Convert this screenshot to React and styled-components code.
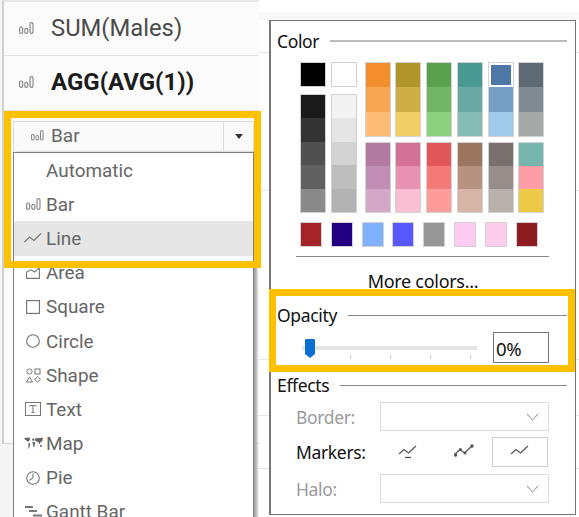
import React from "react";
import styled, { createGlobalStyle } from "styled-components";

const GlobalStyle = createGlobalStyle`
  html, body {
    margin: 0;
    padding: 0;
    background: #fff;
  }
  * {
    box-sizing: border-box;
  }
`;

const HIGHLIGHT = "#ffc000";
const MENU_FONT = `Roboto, "Liberation Sans", sans-serif`;
const DIALOG_FONT = `"Noto Sans", "Open Sans", sans-serif`;

const Page = styled.div`
  position: relative;
  display: flex;
  width: 579px;
  height: 517px;
  overflow: hidden;
  background: #fff;
`;

const Backdrop = styled.div`
  flex: 1;
  margin-top: 12px;
  height: 505px;
  background-color: #fff;
  background-image:
    linear-gradient(#f7f7f7, #f7f7f7),
    linear-gradient(#e6e6e6, #e6e6e6),
    linear-gradient(#e6e6e6, #e6e6e6),
    linear-gradient(#e6e6e6, #e6e6e6),
    linear-gradient(#e6e6e6, #e6e6e6),
    linear-gradient(#e6e6e6, #e6e6e6);
  background-repeat: no-repeat;
  background-size:
    100% 8px,
    100% 1px,
    100% 1px,
    100% 1px,
    100% 1px,
    100% 1px;
  background-position:
    0 0,
    0 40px,
    0 178px,
    0 347px,
    0 403px,
    0 456px;
`;

const Sidebar = styled.div`
  width: 259px;
  height: 517px;
  background: #f5f5f5;
`;

const FieldPanel = styled.div`
  width: 257px;
  height: 444px;
  margin-left: 2px;
  background: #fbfbfb;
  border-left: 2px solid #cfcfcf;
  border-top: 2px solid #e8e8e8;
  border-bottom: 1px solid #cfcfcf;
`;

const FieldRow = styled.div`
  display: flex;
  align-items: center;
  height: ${p => p.$height}px;
  padding: 0 0 2px 15px;
  border-bottom: 1px solid #e2e2e2;
  color: ${p => (p.$bold ? "#1c1c1c" : "#4b4b4b")};
  font-family: ${MENU_FONT};
  font-size: ${p => (p.$bold ? 24 : 23.8)}px;
  font-weight: ${p => (p.$bold ? 700 : 400)};
`;

const FieldIcon = styled.span`
  display: flex;
  width: 32px;
`;

const MarkDropdown = styled.div`
  position: absolute;
  top: 121px;
  left: 13px;
  width: 241px;
  font-family: ${MENU_FONT};
  color: #666;
`;

const MarkSelect = styled.div`
  display: flex;
  align-items: center;
  height: 31px;
  background: #fafafa;
  border: 1px solid #dcdcdc;
  border-bottom: 0;
  font-size: 19px;
`;

const SelectLabel = styled.span`
  flex: 1;
  display: flex;
  align-items: center;
  gap: 7px;
  padding: 0 0 3px 17px;
`;

const ArrowCell = styled.span`
  display: flex;
  align-items: center;
  justify-content: center;
  width: 30px;
  height: 100%;
  padding-bottom: 2px;
  border-left: 1px solid #dcdcdc;

  &::after {
    content: "";
    border-top: 5px solid #333;
    border-left: 4.5px solid transparent;
    border-right: 4.5px solid transparent;
  }
`;

const MarkMenu = styled.div`
  background: #fff;
  border: 1px solid #7f7f7f;
  border-bottom: 0;
  height: 400px;
  box-shadow: 3px 0 2px #a8a8a8;
`;

const MenuRow = styled.div`
  display: flex;
  align-items: center;
  height: 34.2px;
  font-size: 18.9px;
  background: ${p => (p.$active ? "#e6e6e6" : "transparent")};
`;

const MenuIcon = styled.span`
  display: flex;
  align-items: center;
  justify-content: center;
  width: 32px;
  padding-left: 6px;
  flex: none;
`;

const Highlight = styled.div`
  position: absolute;
  top: ${p => p.$top}px;
  left: ${p => p.$left}px;
  width: ${p => p.$width}px;
  height: ${p => p.$height}px;
  border: 7px solid ${HIGHLIGHT};
  pointer-events: none;
`;

const Dialog = styled.div`
  position: absolute;
  top: 20px;
  left: 269px;
  width: 307px;
  height: 495px;
  padding-top: 10px;
  background: #fff;
  border: 1px solid #777;
  border-left-width: 2px;
  font-family: ${DIALOG_FONT};
  letter-spacing: -0.35px;
  color: #111;
`;

const Heading = styled.div`
  display: flex;
  align-items: center;
  gap: 11px;
  height: 20px;
  margin-top: ${p => p.$gap || 0}px;
  padding: 0 8px 0 6px;
  font-size: 17.5px;

  span {
    margin-bottom: 1px;
  }

  &::after {
    content: "";
    flex: 1;
    height: ${p => (p.$thick ? 2 : 1)}px;
    background: ${p => (p.$thick ? "#bbb" : "#888")};
  }
`;

const Palette = styled.div`
  display: flex;
  gap: 8px;
  margin: 11px 0 0 29px;
`;

const GrayGrid = styled.div`
  display: grid;
  grid-template-columns: 26px 26px;
  grid-template-rows: 25px 119px;
  gap: 7px 4.5px;
`;

const ColorGrid = styled.div`
  display: grid;
  grid-template-columns: repeat(6, 26px);
  grid-template-rows: 75px 71px;
  gap: 5px 4.8px;
`;

const Stack = styled.div`
  display: flex;
  flex-direction: column;
  border: 1px solid #d2d2d2;
`;

const StackCell = styled.div`
  flex: 1;
  background: ${p => p.$color};
  ${p => p.$selected && "outline: 2px solid #fff; outline-offset: -2px; box-shadow: 0 0 0 1px #d2d2d2;"}
`;

const CustomRow = styled.div`
  display: flex;
  gap: 8.8px;
  margin: 9px 0 0 29px;
`;

const CustomSwatch = styled.div`
  width: 22px;
  height: 25px;
  background: ${p => p.$color};
  border: 1px solid #d2d2d2;
`;

const Separator = styled.div`
  height: 1px;
  margin: 9px 26px 0 25px;
  background: #888;
`;

const MoreColors = styled.div`
  display: flex;
  align-items: center;
  justify-content: center;
  height: 48px;
  font-size: 18px;
  letter-spacing: -0.3px;
`;

const SliderRow = styled.div`
  display: flex;
  align-items: center;
  gap: 16px;
  margin: 7px 0 0 31px;
  height: 31px;
`;

const Slider = styled.div`
  position: relative;
  width: 175px;
  height: 31px;
`;

const Track = styled.div`
  position: absolute;
  top: 14px;
  left: 0;
  right: 0;
  height: 4px;
  background: #e4e4e4;
`;

const Tick = styled.div`
  position: absolute;
  top: 23px;
  left: ${p => p.$at}px;
  width: 1px;
  height: 4px;
  background: #c8c8c8;
`;

const Thumb = styled.svg`
  position: absolute;
  top: 7px;
  left: 3px;
`;

const PercentInput = styled.div`
  display: flex;
  align-items: center;
  width: 56px;
  height: 31px;
  padding: 1px 0 0 2px;
  border: 1px solid #777;
  font-size: 18.5px;
`;

const FieldLine = styled.div`
  display: flex;
  align-items: center;
  height: ${p => p.$height}px;
  margin: ${p => p.$gap}px 0 0 25px;
`;

const FieldLabel = styled.span`
  width: 84px;
  font-size: 17.5px;
  color: ${p => (p.$disabled ? "#9a9a9a" : "#111")};
`;

const EmptySelect = styled.div`
  display: flex;
  align-items: center;
  justify-content: flex-end;
  width: 169px;
  height: 100%;
  padding-right: 9px;
  border: 1px solid #dadada;
`;

const MarkerButton = styled.div`
  display: flex;
  align-items: center;
  justify-content: center;
  width: 56px;
  height: 100%;
  border: 1px solid ${p => (p.$selected ? "#cfcfcf" : "transparent")};
`;

const BarsIcon = ({ size = 15 }) => (
  <svg width={size} height={size * 0.8} viewBox="0 0 15 12" fill="none" stroke="#8a8a8a" strokeWidth="1.2">
    <rect x="0.6" y="5" width="3" height="6.4" rx="1.4" />
    <rect x="5.8" y="6.4" width="3" height="5" rx="1.4" />
    <rect x="11" y="0.6" width="3" height="10.8" rx="1.4" />
  </svg>
);

const LineIcon = () => (
  <svg width="18" height="12" viewBox="0 0 18 12" fill="none" stroke="#777" strokeWidth="1.2">
    <path d="M0.5 10 L5.5 5 L10 8.5 L17 1.5" />
  </svg>
);

const AreaIcon = () => (
  <svg width="14" height="12" viewBox="0 0 14 12" fill="none" stroke="#777" strokeWidth="1.1">
    <path d="M0.6 5 V11.4 H13.4 V0.8 L8.5 5 L5 2.8 Z" />
  </svg>
);

const SquareIcon = () => (
  <svg width="14" height="14" viewBox="0 0 14 14" fill="none" stroke="#6f6f6f" strokeWidth="1.1">
    <rect x="0.6" y="0.6" width="12.8" height="12.8" />
  </svg>
);

const CircleIcon = () => (
  <svg width="14" height="14" viewBox="0 0 14 14" fill="none" stroke="#6f6f6f" strokeWidth="1.1">
    <circle cx="7" cy="7" r="6.3" />
  </svg>
);

const ShapeIcon = () => (
  <svg width="15" height="15" viewBox="0 0 15 15" fill="none" stroke="#777" strokeWidth="1">
    <circle cx="3.5" cy="3.5" r="2.6" />
    <rect x="9" y="1" width="5" height="5" />
    <path d="M3.5 8.8 L6.5 14 H0.5 Z" />
    <path d="M11.5 8.6 L14.4 11.4 L11.5 14.2 L8.6 11.4 Z" />
  </svg>
);

const TextIcon = () => (
  <svg width="16" height="14" viewBox="0 0 16 14" fill="none" stroke="#777" strokeWidth="1">
    <rect x="0.5" y="0.5" width="15" height="13" />
    <path d="M4.8 4.5 V3.6 H11.2 V4.5 M8 3.6 V10.4 M6.5 10.4 H9.5" />
  </svg>
);

const MapIcon = () => (
  <svg width="19" height="13" viewBox="0 0 19 13" fill="#666">
    <path d="M0 1 L6 0.5 L5.8 3 L4.2 5 L3 4 L1.2 2.8 Z" />
    <path d="M4.4 6 L6.2 6.6 L5.4 11 L4.4 12 Z" />
    <path d="M8 2 L10 1.2 L10.6 3.2 L8.6 4 Z" />
    <path d="M8.4 5 L11 5 L10.6 9.6 L9.4 10 Z" />
    <path d="M11 1.2 L19 0.8 L18.4 4 L16.4 5.2 L15.6 7.4 L14 4.8 L11.6 4.4 Z" />
    <path d="M16 8 L18 8.2 L17.8 10 L16.2 9.8 Z" />
  </svg>
);

const PieIcon = () => (
  <svg width="14" height="14" viewBox="0 0 14 14" fill="none" stroke="#777" strokeWidth="1.1">
    <circle cx="7" cy="7" r="6.3" />
    <path d="M7 2.6 V7 L3.4 9.2" />
  </svg>
);

const GanttIcon = () => (
  <svg width="17" height="11" viewBox="0 0 17 11" fill="#777">
    <rect x="0" y="0" width="8" height="2" />
    <rect x="4" y="4" width="8" height="2" />
    <rect x="8" y="8.5" width="9" height="2" />
  </svg>
);

const Chevron = () => (
  <svg width="13" height="8" viewBox="0 0 13 8" fill="none" stroke="#a8a8a8" strokeWidth="1.1">
    <path d="M0.8 0.8 L6.5 6.8 L12.2 0.8" />
  </svg>
);

const MarkerIcon = ({ variant }) => (
  <svg width="20" height="16" viewBox="0 0 20 16" fill="none" stroke="#555" strokeWidth="1.3">
    <path d="M1 10 L6 5.5 L10.5 9 L18 2" />
    {variant === "selected" && <path d="M7 13.5 H13" />}
    {variant === "all" && (
      <g fill="#555" stroke="none">
        <circle cx="1.6" cy="11" r="1.7" />
        <circle cx="6.4" cy="5.5" r="1.5" />
        <circle cx="11" cy="9" r="1.5" />
        <circle cx="18" cy="2" r="1.7" />
      </g>
    )}
  </svg>
);

const menuItems = [
  { label: "Automatic" },
  { label: "Bar", icon: <BarsIcon /> },
  { label: "Line", icon: <LineIcon />, active: true },
  { label: "Area", icon: <AreaIcon /> },
  { label: "Square", icon: <SquareIcon /> },
  { label: "Circle", icon: <CircleIcon /> },
  { label: "Shape", icon: <ShapeIcon /> },
  { label: "Text", icon: <TextIcon /> },
  { label: "Map", icon: <MapIcon /> },
  { label: "Pie", icon: <PieIcon /> },
  { label: "Gantt Bar", icon: <GanttIcon /> },
];

const grays = [
  ["#000000"],
  ["#ffffff"],
  ["#1a1a1a", "#333333", "#505050", "#606060", "#8a8a8a"],
  ["#f3f3f3", "#e5e5e5", "#d3d3d3", "#bebebe", "#b2b2b2"],
];

const colors = [
  ["#f28e2b", "#f9a654", "#ffbc79"],
  ["#b0952b", "#cfaf45", "#f1ce63"],
  ["#59a14f", "#70b666", "#8cd17d"],
  ["#499894", "#69a9a5", "#86bcb6"],
  ["#4e79a7", "#759fc5", "#a0cbe8"],
  ["#5e6a74", "#7f8a92", "#a5aaa8"],
  ["#b07aa1", "#c18fb5", "#d4a6c8"],
  ["#d37295", "#e692b0", "#fabfd2"],
  ["#e15759", "#f47a78", "#ff9d9a"],
  ["#9d7660", "#b89280", "#d7b5a6"],
  ["#79706e", "#978d8a", "#bab0ac"],
  ["#76b5ad", "#ff9da7", "#edc948"],
];

const customColors = ["#a52428", "#22007f", "#80b1ff", "#5858ff", "#969696", "#fdcbf1", "#fdcbec", "#8c1c1f"];

const ticks = [48, 88, 128, 168];

export default function App() {
  return (
    <Page>
      <GlobalStyle />
      <Sidebar>
        <FieldPanel>
          <FieldRow $height={54}>
            <FieldIcon>
              <BarsIcon />
            </FieldIcon>
            SUM(Males)
          </FieldRow>
          <FieldRow $height={55} $bold>
            <FieldIcon>
              <BarsIcon />
            </FieldIcon>
            AGG(AVG(1))
          </FieldRow>
        </FieldPanel>
      </Sidebar>
      <Backdrop />

      <MarkDropdown>
        <MarkSelect>
          <SelectLabel>
            <BarsIcon size={13} />
            Bar
          </SelectLabel>
          <ArrowCell />
        </MarkSelect>
        <MarkMenu>
          {menuItems.map(item => (
            <MenuRow key={item.label} $active={item.active}>
              <MenuIcon>{item.icon}</MenuIcon>
              {item.label}
            </MenuRow>
          ))}
        </MarkMenu>
      </MarkDropdown>

      <Dialog>
        <Heading $thick>
          <span>Color</span>
        </Heading>
        <Palette>
          <GrayGrid>
            {grays.map(stack => (
              <Stack key={stack[0]}>
                {stack.map(color => (
                  <StackCell key={color} $color={color} />
                ))}
              </Stack>
            ))}
          </GrayGrid>
          <ColorGrid>
            {colors.map(stack => (
              <Stack key={stack[0]}>
                {stack.map(color => (
                  <StackCell key={color} $color={color} $selected={color === "#4e79a7"} />
                ))}
              </Stack>
            ))}
          </ColorGrid>
        </Palette>
        <CustomRow>
          {customColors.map(color => (
            <CustomSwatch key={color} $color={color} />
          ))}
        </CustomRow>
        <Separator />
        <MoreColors>More colors...</MoreColors>
        <Heading>
          <span>Opacity</span>
        </Heading>
        <SliderRow>
          <Slider>
            <Track />
            {ticks.map(at => (
              <Tick key={at} $at={at} />
            ))}
            <Thumb width="10" height="19" viewBox="0 0 10 19">
              <path d="M1 0 H9 A1 1 0 0 1 10 1 V15 L5 19 L0 15 V1 A1 1 0 0 1 1 0 Z" fill="#0a6fd2" />
            </Thumb>
          </Slider>
          <PercentInput>0%</PercentInput>
        </SliderRow>
        <Heading $gap={12}>
          <span>Effects</span>
        </Heading>
        <FieldLine $height={29} $gap={7}>
          <FieldLabel $disabled>Border:</FieldLabel>
          <EmptySelect>
            <Chevron />
          </EmptySelect>
        </FieldLine>
        <FieldLine $height={30} $gap={6}>
          <FieldLabel>Markers:</FieldLabel>
          <MarkerButton>
            <MarkerIcon variant="selected" />
          </MarkerButton>
          <MarkerButton>
            <MarkerIcon variant="all" />
          </MarkerButton>
          <MarkerButton $selected>
            <MarkerIcon variant="none" />
          </MarkerButton>
        </FieldLine>
        <FieldLine $height={29} $gap={7}>
          <FieldLabel $disabled>Halo:</FieldLabel>
          <EmptySelect>
            <Chevron />
          </EmptySelect>
        </FieldLine>
      </Dialog>

      <Highlight $top={111} $left={4} $width={257} $height={157} />
      <Highlight $top={289} $left={269} $width={306} $height={83} />
    </Page>
  );
}
